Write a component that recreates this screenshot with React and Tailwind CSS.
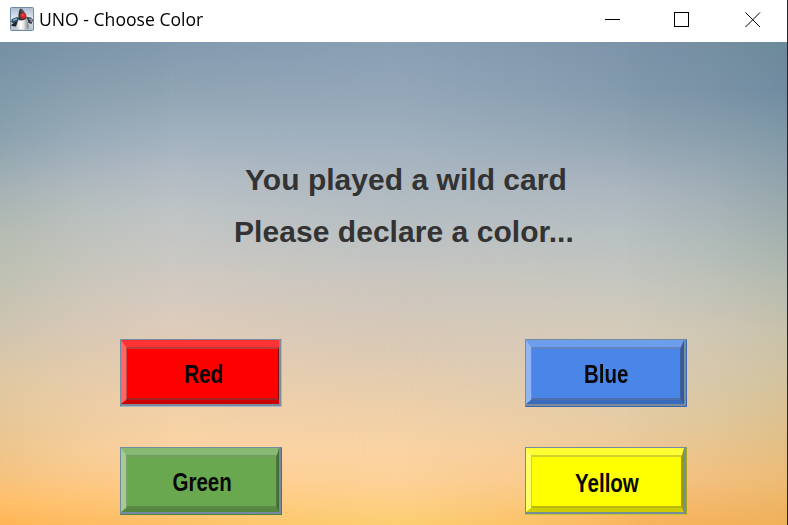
import React from "react";

function DukeIcon() {
  return (
    <svg width="24" height="24" viewBox="0 0 24 24" className="block shrink-0">
      <defs>
        <linearGradient id="tile" x1="0" y1="0" x2="0" y2="1">
          <stop offset="0" stopColor="#a9bbcf" />
          <stop offset="0.45" stopColor="#dfe6ee" />
          <stop offset="1" stopColor="#b5c0cc" />
        </linearGradient>
        <linearGradient id="belly" x1="0" y1="0" x2="1" y2="0">
          <stop offset="0" stopColor="#c9c9c7" />
          <stop offset="0.35" stopColor="#ffffff" />
          <stop offset="0.6" stopColor="#e6e6e4" />
          <stop offset="1" stopColor="#77797c" />
        </linearGradient>
      </defs>
      <rect x="0.5" y="0.5" width="23" height="23" rx="1" fill="url(#tile)" stroke="#6f8ba5" />
      <path d="M2 12l5-2 2 1v4l-5 2-3-2z" fill="#34495c" />
      <path d="M3 12.500l4-1.400v1.600l-4 1.200z" fill="#7fb4dc" />
      <path d="M1.500 17.500l5.500-3 2 2-3 3-4.500-.5z" fill="#202328" />
      <path d="M16.500 10l4.500 .5 2 2.500-1.500 4-3-1z" fill="#323c48" />
      <path d="M19 12.300l2.200-.3v3" fill="none" stroke="#aebdca" />
      <path d="M8.500 12.500c-1 3-3 6.500-2 9 2.500 1.500 9 1.500 12 0 1-2.500-.8-6.500-2-10z" fill="url(#belly)" />
      <path d="M10.500 1.500c2 0 5.200 5 6.400 9.500-1.500 2-5.200 3-8.400 2C8 8.500 9 2 10.500 1.500z" fill="#38383c" />
      <path d="M11 2.500l3 4.300" stroke="#7e8084" strokeWidth="0.8" />
      <circle cx="13.300" cy="8.700" r="3" fill="#dc2226" />
      <circle cx="12.600" cy="7.900" r="1" fill="#f4504e" />
    </svg>
  );
}

function TitleBar() {
  return (
    <header className="flex h-[42px] items-start bg-white text-black">
      <div className="flex pl-[10px] pt-[7px]">
        <DukeIcon />
        <span className="ml-[5px] origin-left scale-x-[0.977] whitespace-nowrap font-['Open_Sans',sans-serif] text-[18px] leading-[24px]">
          UNO - Choose Color
        </span>
      </div>
      <div className="ml-auto flex pr-[26px] pt-[12px]">
        <svg width="16" height="16" shapeRendering="crispEdges" className="mr-[53px]">
          <path d="M0 7.5H15" stroke="#000" />
        </svg>
        <svg width="16" height="16" shapeRendering="crispEdges" className="mr-[55px]">
          <rect x="0.5" y="0.5" width="14" height="14" fill="none" stroke="#000" />
        </svg>
        <svg width="16" height="16">
          <path d="M0.500 0.500L15 15M15 0.500L0.500 15" stroke="#000" strokeWidth="1" />
        </svg>
      </div>
    </header>
  );
}

function Sky() {
  return (
    <>
      <div className="absolute inset-0 bg-[linear-gradient(to_bottom,#899fb4_0%,#95a9ba_12%,#a4b3c0_22%,#b2bcc2_33%,#c0c3c2_43%,#c9c6c0_48%,#d0c7bc_54%,#dccab5_64%,#ebcfab_74%,#fad3a4_84%,#fdd298_91%,#fdcf72_100%)]" />
      <div className="absolute inset-0 bg-[linear-gradient(to_bottom,#8299af_0%,#8fa4b3_10%,#a2b2bf_20%,#b2bbc4_27%,#bfc4c5_35%,#cac8c3_45%,#d9cbbe_55%,#e4ccb3_65%,#f1d0a9_75%,#fbd3a1_85%,#ffcc88_92%,#fdc067_100%)] [mask-image:linear-gradient(to_right,black_160px,rgba(0,0,0,0.5)_260px,transparent_400px)]" />
      <div className="absolute inset-0 bg-[linear-gradient(to_bottom,#748fa3_0%,#8ba2af_20%,#a4b1b4_30%,#b5bcb2_40%,#c0c1b2_50%,#cfc4af_60%,#dfc8a3_70%,#e7c694_80%,#f5c27f_90%,#ffbf69_95%,#ffb456_100%)] [mask-image:linear-gradient(to_right,black,rgba(0,0,0,0.4)_80px,transparent_170px)]" />
      <div className="absolute inset-0 bg-[linear-gradient(to_bottom,#7b92a8_0%,#8299ac_10%,#92a5b2_20%,#aab5bf_30%,#b8c0c1_40%,#c6c7bf_50%,#d5cbba_60%,#dbcbb2_70%,#e7cba0_80%,#f6c486_90%,#f9b45c_100%)] [mask-image:linear-gradient(to_left,black_147px,rgba(0,0,0,0.5)_250px,transparent_390px)]" />
      <div className="absolute inset-0 bg-[linear-gradient(to_bottom,#6c8a9b_0%,#718ba0_10%,#829aa8_20%,#94a5ac_30%,#a3b1ae_40%,#b5bbaf_50%,#c8c1ab_60%,#d2c39e_70%,#ddc08b_80%,#ecbb77_90%,#efb059_100%)] [mask-image:linear-gradient(to_left,black,rgba(0,0,0,0.4)_80px,transparent_160px)]" />
    </>
  );
}

const buttons = [
  {
    label: "Red",
    edge: "border-[#748ca0] border-r-[#a5b8cc] border-b-[#a5b8cc]",
    rim: "border-[#778b9b]",
    bevel: "border-t-[#ff3333] border-l-[#ff6666] border-b-[#cc0000] border-r-[#990000] border-r-0",
    inner: "border-t-[#c23c3c] border-l-[#c94848] border-b-[#a92020] border-r-[#7d1111] bg-[#ff0000]",
    nudge: "translate-x-px",
  },
  {
    label: "Blue",
    edge: "border-[#748ca0] border-r-[#3b66b2] border-b-[#3b66b2]",
    rim: "border-[#7b8b98]",
    bevel: "border-t-[#6d9eeb] border-l-[#91b5f1] border-b-[#3a6abb] border-r-[#345a9c] border-r-[3px]",
    inner: "border-t-[#6283bd] border-l-[#6d8dc5] border-b-[#4c70ad] border-r-[#3e609f] bg-[#4a86e8]",
    nudge: "",
  },
  {
    label: "Green",
    edge: "border-[#748ca0] border-r-[#4b793b] border-b-[#52843e]",
    rim: "border-[#7589a0]",
    bevel: "border-t-[#88b972] border-l-[#a5ca94] border-b-[#54863f] border-r-[#446c35] border-r-[2px]",
    inner: "border-t-[#729c60] border-l-[#7aa269] border-b-[#5b8a49] border-r-[#50783f] bg-[#6aa84f]",
    nudge: "translate-x-px",
  },
  {
    label: "Yellow",
    edge: "border-[#748ca0] border-r-[#a5a51c] border-b-[#c4c423]",
    rim: "border-[#788d9b]",
    bevel: "border-t-[#ffff33] border-l-[#ffff66] border-b-[#cccc00] border-r-[#999900] border-r-[2px]",
    inner: "border-t-[#d2d22d] border-l-[#d0d03f] border-b-[#b8b810] border-r-[#a0a000] bg-[#ffff00]",
    nudge: "translate-y-px",
  },
];

function BevelButton({ label, edge, rim, bevel, inner, nudge }) {
  return (
    <button className={`flex h-[68px] w-[162px] border ${edge}`}>
      <span className={`flex h-full w-full border-r-2 border-b-2 ${rim}`}>
        <span className={`flex h-full w-full border-t-[7px] border-l-[5px] border-b-[4px] ${bevel}`}>
          <span className={`flex h-full w-full items-center justify-center border-t-2 border-l border-r border-b-2 ${inner}`}>
            <span className={`block scale-x-[0.82] whitespace-nowrap font-['Liberation_Sans',Arial,sans-serif] text-[25px] font-bold leading-[28px] text-[#080808] ${nudge}`}>
              {label}
            </span>
          </span>
        </span>
      </span>
    </button>
  );
}

export default function App() {
  return (
    <div className="flex h-[525px] w-[788px] flex-col overflow-hidden border-r border-[#25282b] bg-white">
      <TitleBar />
      <main className="relative min-h-0 flex-1">
        <Sky />
        <div className="relative flex flex-col">
          <div className="pt-[112px] font-['Liberation_Sans',Arial,sans-serif] text-[30px] font-bold leading-[52px] text-[#333333]">
            <p className="whitespace-nowrap pl-[245px] tracking-[0.03px]">You played a wild card</p>
            <p className="whitespace-nowrap pl-[234px] tracking-[0.05px]">Please declare a color...</p>
          </div>
          <div className="mt-[81px] grid w-fit grid-cols-2 gap-x-[243px] gap-y-[40px] pl-[120px]">
            {buttons.map((b) => (
              <BevelButton key={b.label} {...b} />
            ))}
          </div>
        </div>
      </main>
    </div>
  );
}
